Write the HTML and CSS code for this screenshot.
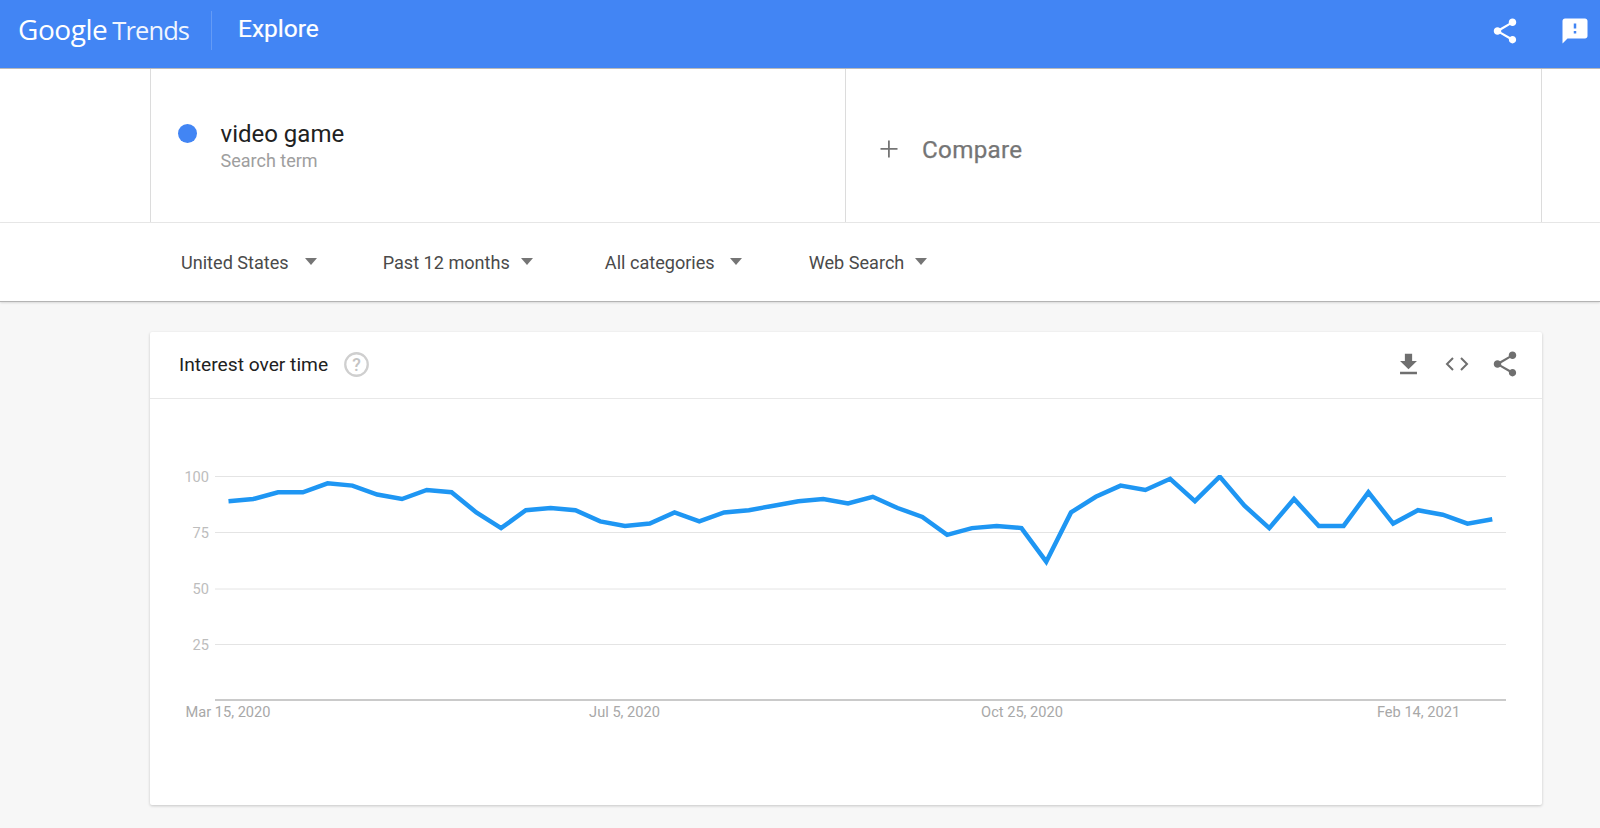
FILE: index.html
```html
<!DOCTYPE html>
<html lang="en">
<head>
<meta charset="utf-8">
<title>Google Trends - Explore</title>
<link rel="stylesheet" href="styles.css">
</head>
<body>
<header class="topbar">
  <div class="logo"><span class="logo-google">Google</span><span class="logo-trends">Trends</span></div>
  <div class="topbar-divider"></div>
  <div class="topbar-title">Explore</div>
  <div class="topbar-actions">
    <svg class="icon-share-top" viewBox="0 0 24 24" width="30" height="30"><path fill="#fff" d="M18 16.08c-.76 0-1.44.3-1.96.77L8.91 12.7c.05-.23.09-.46.09-.7s-.04-.47-.09-.7l7.05-4.11c.54.5 1.25.81 2.04.81 1.66 0 3-1.34 3-3s-1.34-3-3-3-3 1.34-3 3c0 .24.04.47.09.7L8.04 9.81C7.5 9.31 6.79 9 6 9c-1.66 0-3 1.34-3 3s1.34 3 3 3c.79 0 1.5-.31 2.04-.81l7.12 4.16c-.05.21-.08.43-.08.65 0 1.61 1.31 2.92 2.92 2.92s2.92-1.31 2.92-2.92-1.31-2.92-2.92-2.92z"/></svg>
    <svg class="icon-feedback" viewBox="0 0 24 24" width="30" height="30"><path fill="#fff" d="M20 2H4c-1.100 0-2 .9-2 2v18l4-4h14c1.100 0 2-.9 2-2V4c0-1.100-.9-2-2-2zm-7 12h-2v-2h2v2zm0-4h-2V6h2v4z"/></svg>
  </div>
</header>

<section class="search-row">
  <div class="term-cell">
    <span class="term-dot"></span>
    <div class="term-text">
      <div class="term-name">video game</div>
      <div class="term-type">Search term</div>
    </div>
  </div>
  <div class="compare-cell">
    <svg class="icon-plus" viewBox="0 0 20 20" width="20" height="20"><path fill="#757575" d="M9 1.500h1.800V9H18.500v1.800H10.800V18.500H9V10.800H1.500V9H9z"/></svg>
    <span class="compare-label">Compare</span>
  </div>
</section>

<nav class="filter-bar">
  <div class="filter filter-geo"><span>United States</span><i class="caret"></i></div>
  <div class="filter filter-time"><span>Past 12 months</span><i class="caret"></i></div>
  <div class="filter filter-cat"><span>All categories</span><i class="caret"></i></div>
  <div class="filter filter-type"><span>Web Search</span><i class="caret"></i></div>
</nav>

<main class="content">
  <article class="card">
    <div class="card-head">
      <h2 class="card-title">Interest over time</h2>
      <svg class="icon-help" viewBox="0 0 24 24" width="25" height="25"><circle cx="12" cy="12" r="10.800" fill="none" stroke="#cfcfcf" stroke-width="2.200"/><text x="12" y="18" text-anchor="middle" class="help-mark">?</text></svg>
      <div class="card-actions">
        <svg class="icon-download" viewBox="0 0 24 24" width="29" height="29"><path fill="#6f6f6f" d="M19 9h-4V3H9v6H5l7 7 7-7zM5 18v2h14v-2H5z"/></svg>
        <svg class="icon-code" viewBox="0 0 26 16" width="26" height="16"><path fill="none" stroke="#6f6f6f" stroke-width="2" d="M9 2 3 8l6 6M17 2l6 6-6 6"/></svg>
        <svg class="icon-share" viewBox="0 0 24 24" width="30" height="30"><path fill="#6f6f6f" d="M18 16.080c-.76 0-1.440.3-1.960.77L8.910 12.700c.05-.23.09-.46.09-.7s-.04-.47-.09-.7l7.050-4.110c.54.5 1.250.81 2.040.81 1.660 0 3-1.340 3-3s-1.340-3-3-3-3 1.340-3 3c0 .24.04.47.09.7L8.040 9.810C7.500 9.310 6.790 9 6 9c-1.660 0-3 1.340-3 3s1.340 3 3 3c.79 0 1.500-.31 2.040-.81l7.120 4.160c-.05.21-.08.43-.08.65 0 1.610 1.310 2.920 2.920 2.920s2.920-1.310 2.920-2.920-1.310-2.920-2.920-2.920z"/></svg>
      </div>
    </div>
    <svg class="chart" viewBox="150 399 1392 406" width="1392" height="406">
      <defs><clipPath id="plot"><rect x="215" y="475" width="1291" height="225"/></clipPath></defs>
      <g class="grid">
        <line x1="215" x2="1506" y1="476.500" y2="476.500"/>
        <line x1="215" x2="1506" y1="532.500" y2="532.500"/>
        <line x1="215" x2="1506" y1="589" y2="589"/>
        <line x1="215" x2="1506" y1="644.500" y2="644.500"/>
      </g>
      <line class="axis" x1="215" x2="1506" y1="700" y2="700"/>
      <g class="ylabels">
        <text x="209" y="481.500">100</text>
        <text x="209" y="537.500">75</text>
        <text x="209" y="594">50</text>
        <text x="209" y="649.500">25</text>
      </g>
      <g class="xlabels">
        <text x="228" y="717">Mar 15, 2020</text>
        <text x="624.500" y="717">Jul 5, 2020</text>
        <text x="1022" y="717">Oct 25, 2020</text>
        <text x="1418.500" y="717">Feb 14, 2021</text>
      </g>
      <g clip-path="url(#plot)">
        <polyline class="series" transform="translate(0 .6)" points="228.500,500.600 253.280,498.400 278.060,491.700 302.840,491.700 327.620,482.700 352.400,485 377.180,493.900 401.960,498.400 426.740,489.400 451.520,491.700 476.300,511.800 501.080,527.500 525.860,509.600 550.640,507.400 575.420,509.600 600.200,520.800 624.980,525.300 649.760,523 674.540,511.800 699.320,520.800 724.100,511.800 748.880,509.600 773.660,505.100 798.440,500.600 823.220,498.400 848,502.900 872.780,496.200 897.560,507.400 922.340,516.300 947.120,534.200 971.900,527.500 996.680,525.300 1021.460,527.500 1046.240,561.100 1071.020,511.800 1095.800,496.200 1120.580,485 1145.360,489.400 1170.140,478.200 1194.920,500.600 1219.700,476 1244.480,505.100 1269.260,527.500 1294.040,498.400 1318.820,525.300 1343.600,525.300 1368.380,491.700 1393.160,523 1417.940,509.600 1442.720,514.100 1467.500,523 1492.280,518.600"/>
      </g>
    </svg>
  </article>
</main>
</body>
</html>
```
FILE: styles.css
```css
* { box-sizing: border-box; }
html, body { margin: 0; height: 100%; overflow: hidden; }
body { background: #f7f7f7; font-family: Roboto, "Liberation Sans", sans-serif; color: #212121; }

.topbar {
  height: 69px;
  background: #4285f4;
  border-bottom: 1px solid #b9b9b9;
  display: flex;
  align-items: center;
  color: #fff;
  padding-left: 18px;
  position: relative;
  z-index: 2;
}
.logo { display: flex; align-items: baseline; width: 193px; margin-top: -11px; white-space: nowrap; }
.logo-google { font-family: "Open Sans", sans-serif; font-size: 28px; font-weight: 500; letter-spacing: -.45px; }
.logo-trends { font-family: "Open Sans", sans-serif; font-size: 25.500px; font-weight: 400; letter-spacing: -.9px; margin-left: 5px; opacity: .92; }
.topbar-divider { width: 1px; height: 39px; background: rgba(255,255,255,.18); margin-top: -8px; }
.topbar-title { font-size: 24.500px; font-weight: 400; margin-left: 26px; margin-top: -11px; -webkit-text-stroke: .2px #fff; }
.topbar-actions { margin-left: auto; display: flex; align-items: center; gap: 40px; padding-right: 10px; margin-top: -7px; }

.search-row { height: 154px; background: #fff; padding: 0 58px 0 150px; display: flex; border-bottom: 1px solid #e8e8e8; }
.term-cell { width: 695px; border-left: 1px solid #dcdcdc; display: flex; align-items: flex-start; padding: 55px 0 0 27px; }
.term-dot { width: 19px; height: 19px; border-radius: 50%; background: #4285f4; }
.term-text { margin-left: 23.500px; margin-top: -3px; }
.term-name { font-size: 24px; line-height: 27px; color: #212121; }
.term-type { font-size: 18px; line-height: 24px; color: #9e9e9e; margin-top: 1px; }
.compare-cell { flex: 1; border-left: 1px solid #dcdcdc; border-right: 1px solid #dcdcdc; display: flex; align-items: center; padding: 8px 0 0 33px; }
.icon-plus { margin-top: -2px; }
.compare-label { font-size: 24.200px; font-weight: 400; color: #757575; margin-left: 23px; letter-spacing: .3px; -webkit-text-stroke: .25px #757575; }

.filter-bar { height: 79px; background: #fff; display: flex; align-items: center; border-bottom: 1px solid #b4b4b4; box-shadow: 0 1px 2px rgba(0,0,0,.12); padding-top: 1px; }
.filter { display: flex; align-items: center; font-size: 18.100px; color: #4a4a4a; }
.filter-geo { margin-left: 181px; }
.filter-time { margin-left: 66px; }
.filter-cat { margin-left: 72px; }
.filter-type { margin-left: 67px; }
.caret { width: 0; height: 0; border: 6.500px solid transparent; border-top: 7px solid #757575; border-bottom: 0; margin-top: -3px; }
.filter-geo .caret { margin-left: 16px; }
.filter-time .caret { margin-left: 11px; }
.filter-cat .caret { margin-left: 15px; }
.filter-type .caret { margin-left: 11px; }

.content { padding: 30px 58px 0 150px; }
.card { height: 473px; background: #fff; border-radius: 2px; box-shadow: 0 1px 3px rgba(0,0,0,.2); }
.card-head { height: 67px; display: flex; align-items: center; padding: 0 22px 2px 29px; border-bottom: 1px solid #e8e8e8; }
.card-title { margin: 0; font-size: 19.200px; font-weight: 400; color: #212121; }
.icon-help { margin-left: 16px; }
.help-mark { font: 500 17px Roboto, sans-serif; fill: #c4c4c4; }
.card-actions { margin-left: auto; display: flex; align-items: center; }
.icon-code { margin-left: 21px; }
.icon-share { margin-left: 20px; }
.chart { display: block; }
.grid line { stroke: #e4e4e4; stroke-width: 1; }
.axis { stroke: #b8b8b8; stroke-width: 1.500; }
.ylabels text { font: 14.600px Roboto, sans-serif; fill: #bdbdbd; text-anchor: end; }
.xlabels text { font: 14.600px Roboto, sans-serif; fill: #a8a8a8; text-anchor: middle; }
.series { fill: none; stroke: #1e96f3; stroke-width: 4.500; stroke-linejoin: miter; }
```
